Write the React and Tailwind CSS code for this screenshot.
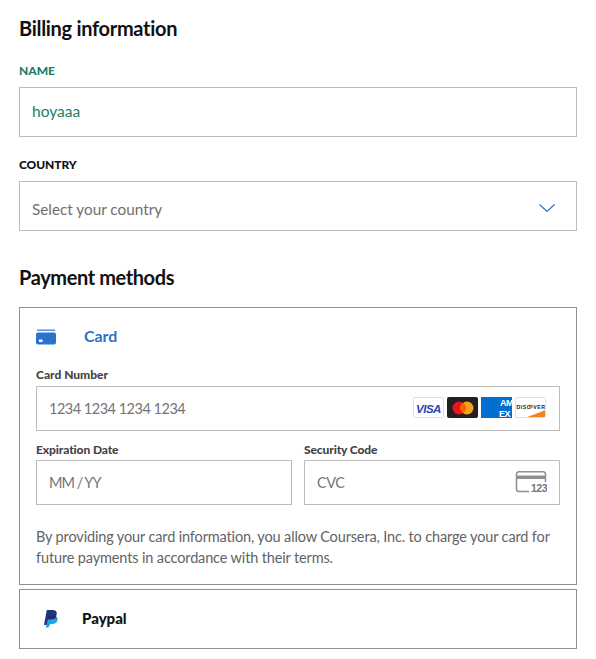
const font = "font-['Lato','Liberation_Sans',sans-serif]";

function CardIcon() {
  return (
    <svg width="20" height="16" viewBox="0 0 20 16" className="shrink-0 -ml-[0.5px]">
      <path d="M1 1.2h18" stroke="#2a73cc" strokeWidth="1.2" />
      <path d="M0 5.500a2 2 0 0 1 2-2h16a2 2 0 0 1 2 2v8a2 2 0 0 1-2 2H2a2 2 0 0 1-2-2z" fill="#2a73cc" />
      <rect x="3" y="10.500" width="3.500" height="2.500" fill="#fff" />
    </svg>
  );
}

function Brands() {
  return (
    <div className="flex items-center gap-[3px] mb-[2px]">
      <div className="w-[31px] h-[21px] rounded-[2px] border border-[#e0e0e0] bg-white flex items-center justify-center">
        <svg width="27" height="12" viewBox="0 0 27 12"><text x="13.500" y="10.500" textAnchor="middle" fontFamily="Liberation Sans" fontWeight="700" fontStyle="italic" fontSize="11.500" fill="#2a3fb0">VISA</text></svg>
      </div>
      <div className="w-[31px] h-[21px] rounded-[2px] bg-[#231f20] flex items-center justify-center">
        <svg width="24" height="16" viewBox="0 0 24 16">
          <circle cx="8" cy="8" r="6.500" fill="#e8141f" />
          <circle cx="16" cy="8" r="6.500" fill="#f79e1b" />
          <path d="M12 2.600a6.500 6.500 0 0 1 0 10.800a6.500 6.500 0 0 1 0-10.800z" fill="#ff5f00" />
        </svg>
      </div>
      <div className="w-[31px] h-[21px] bg-[#016fd0] flex items-center justify-end overflow-hidden">
        <svg width="22" height="21" viewBox="0 0 22 21"><text x="23" y="9" textAnchor="end" fontFamily="Liberation Sans" fontWeight="700" fontSize="9" fill="#fff">AM</text><text x="20" y="19.500" textAnchor="end" fontFamily="Liberation Sans" fontWeight="700" fontSize="9" fill="#fff">EX</text></svg>
      </div>
      <div className="relative w-[31px] h-[21px] rounded-[2px] border border-[#e0e0e0] bg-white overflow-hidden flex items-center justify-center">
        <svg width="29" height="19" viewBox="0 0 29 19" className="absolute inset-0">
          <path d="M29 12C22 15.500 15 17.500 11 19h18z" fill="#f48120" />
          <circle cx="15" cy="8.500" r="2" fill="#f48120" />
          <text x="0.500" y="10.500" fontFamily="Liberation Sans" fontWeight="700" fontSize="5.200" fill="#222" textLength="28">DISC VER</text>
        </svg>
      </div>
    </div>
  );
}

function CvcIcon() {
  return (
    <svg width="32" height="24" viewBox="0 0 32 24">
      <path d="M14 20.500H4a2.500 2.500 0 0 1-2.500-2.500V3A2.500 2.500 0 0 1 4 .8h24A2.500 2.500 0 0 1 30.500 3v8" fill="none" stroke="#8e8e93" strokeWidth="1.500" />
      <rect x="1.500" y="4.500" width="29" height="3.500" fill="#8e8e93" />
      <text x="32" y="21" textAnchor="end" fontFamily="Liberation Sans" fontWeight="700" fontSize="10.500" fill="#75757a">123</text>
    </svg>
  );
}

function PaypalIcon() {
  return (
    <svg width="15" height="19" viewBox="0 0 15 19">
      <path d="M4.300 17.500H1.800L4.300 6h5c2.800 0 4.700 1 4.300 3.800-.5 3-2.700 4.300-5.400 4.300H6.400z" fill="#1ea6de" />
      <path d="M2.600 15H0L2.800 0h5.400c3 0 5 1.300 4.500 4.200-.5 3.300-2.900 5.100-5.800 5.100H4z" fill="#20357f" />
      <path d="M4 9.300 4.900 6h4.400c1.200 0 2.300.2 3.100.7-.7 1.800-2.800 2.600-5.500 2.600z" fill="#1b2a6b" />
    </svg>
  );
}

export default function App() {
  return (
    <div className={`${font} w-[596px] h-[659px] overflow-hidden bg-white px-[19px] text-[#1f1f1f]`}>
      <h2 className="pt-[16px] text-[20px] leading-[25px] font-bold tracking-[-0.3px] text-[#111]">Billing information</h2>

      <label className="mt-[22px] block h-[16px] text-[12px] leading-[16px] font-black text-[#1c7d6a]">NAME</label>
      <div className="mt-[8px] h-[50px] w-[558px] border border-[#bdbdbd] pl-[12px] flex items-center text-[15.500px] text-[#1c7d6a]">hoyaaa</div>

      <label className="mt-[20px] block h-[16px] text-[12px] leading-[16px] font-black tracking-[-0.1px] text-[#111]">COUNTRY</label>
      <div className="mt-[8px] h-[50px] w-[558px] border border-[#bdbdbd] pl-[12px] pr-[21px] flex items-center justify-between text-[15.300px] text-[#6f6f6f]">
        <span className="pt-[5px] leading-[20px]">Select your country</span>
        <svg width="16" height="9" viewBox="0 0 16 9" fill="none" className="mt-[4px]"><path d="M.5.5 8 7.500 15.500.5" stroke="#2a73cc" strokeWidth="1.200" /></svg>
      </div>

      <h2 className="mt-[34px] text-[20px] leading-[25px] font-bold tracking-[-0.4px] text-[#111]">Payment methods</h2>

      <div className="mt-[17px] h-[278px] w-[558px] border border-[#8f8f8f] px-[16px]">
        <div className="flex h-[58px] items-center pb-[1px]">
          <CardIcon />
          <span className="ml-[28.500px] pb-[2px] text-[16px] font-bold tracking-[-0.1px] text-[#2a73cc]">Card</span>
        </div>
        <div className="h-[19px] pt-[1px] text-[12px] leading-[16px] font-black text-[#444]">Card Number</div>
        <div className="h-[45px] mt-[1px] w-[524px] border border-[#bdbdbd] pl-[12px] pr-[13px] flex items-center justify-between text-[14.500px] tracking-[-0.5px] text-[#757575]">
          <span>1234 1234 1234 1234</span>
          <Brands />
        </div>
        <div className="mt-[10px] grid grid-cols-2 gap-x-[12px] w-[524px]">
          <div>
            <div className="h-[19px] text-[12px] leading-[17px] font-black tracking-[-0.1px] text-[#444]">Expiration Date</div>
            <div className="h-[45px] border border-[#bdbdbd] pl-[12px] flex items-center text-[14.500px] tracking-[-1px] text-[#757575]">MM / YY</div>
          </div>
          <div>
            <div className="h-[19px] text-[12px] leading-[17px] font-black tracking-[-0.1px] text-[#444]">Security Code</div>
            <div className="h-[45px] border border-[#bdbdbd] pl-[12px] pr-[12px] flex items-center justify-between text-[14.500px] tracking-[-0.5px] text-[#757575]">
              <span>CVC</span>
              <CvcIcon />
            </div>
          </div>
        </div>
        <p className="mt-[21px] text-[14.500px] leading-[21px] tracking-[-0.14px] text-[#636363] w-[524px]">By providing your card information, you allow Coursera, Inc. to charge your card for future payments in accordance with their terms.</p>
      </div>

      <div className="mt-[4px] h-[60px] w-[558px] border border-[#8f8f8f] pl-[24px] flex items-center">
        <PaypalIcon />
        <span className="ml-[23px] pb-[1px] text-[15px] font-black text-[#111]">Paypal</span>
      </div>
    </div>
  );
}
